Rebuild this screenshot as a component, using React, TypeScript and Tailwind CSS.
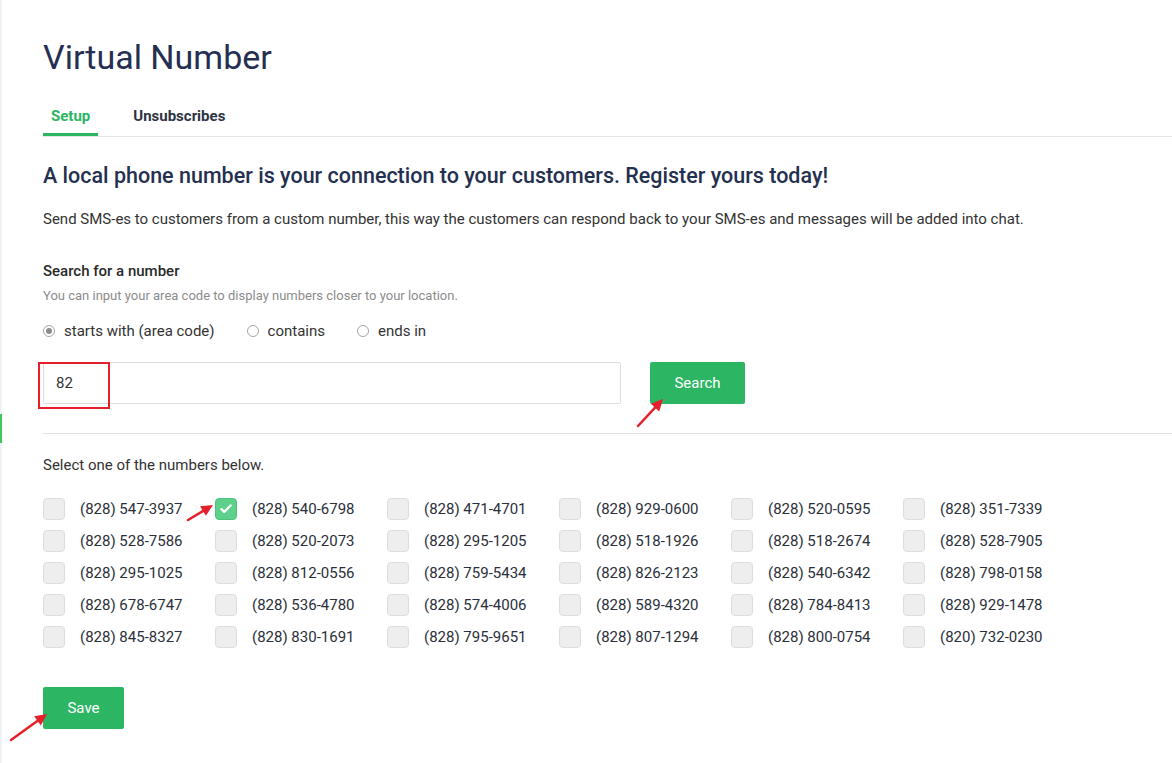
import { Check } from 'lucide-react'

const numbers = [
  ['(828) 547-3937', '(828) 540-6798', '(828) 471-4701', '(828) 929-0600', '(828) 520-0595', '(828) 351-7339'],
  ['(828) 528-7586', '(828) 520-2073', '(828) 295-1205', '(828) 518-1926', '(828) 518-2674', '(828) 528-7905'],
  ['(828) 295-1025', '(828) 812-0556', '(828) 759-5434', '(828) 826-2123', '(828) 540-6342', '(828) 798-0158'],
  ['(828) 678-6747', '(828) 536-4780', '(828) 574-4006', '(828) 589-4320', '(828) 784-8413', '(828) 929-1478'],
  ['(828) 845-8327', '(828) 830-1691', '(828) 795-9651', '(828) 807-1294', '(828) 800-0754', '(820) 732-0230'],
]

function Arrow({ x1, y1, x2, y2 }: { x1: number; y1: number; x2: number; y2: number }) {
  // red annotation arrow, drawn tail -> tip
  const ang = Math.atan2(y2 - y1, x2 - x1)
  const len = 13
  const spread = 0.45
  const ax = x2 - len * Math.cos(ang - spread)
  const ay = y2 - len * Math.sin(ang - spread)
  const bx = x2 - len * Math.cos(ang + spread)
  const by = y2 - len * Math.sin(ang + spread)
  const sx = x2 - 9 * Math.cos(ang)
  const sy = y2 - 9 * Math.sin(ang)
  return (
    <g>
      <line x1={x1} y1={y1} x2={sx} y2={sy} stroke="#e4202a" strokeWidth={2.5} strokeLinecap="round" />
      <polygon points={`${x2},${y2} ${ax},${ay} ${bx},${by}`} fill="#e4202a" />
    </g>
  )
}

function Radio({ label, checked }: { label: string; checked?: boolean }) {
  return (
    <label className="flex items-center gap-[9px]">
      <span className="w-3 h-3 rounded-full border border-[#a5a5a5] bg-white flex items-center justify-center">
        {checked && <span className="w-[6px] h-[6px] rounded-full bg-[#8d8d8d]" />}
      </span>
      <span>{label}</span>
    </label>
  )
}

export default function App() {
  return (
    <div className="relative flex min-h-[763px] bg-white text-[#333] font-['Roboto','Liberation_Sans',sans-serif]">
      {/* sidebar edge */}
      <div className="w-[2px] shrink-0 bg-[#eef1f6]">
        <div className="mt-[414px] h-[29px] w-[2px] bg-[#3cc75a]" />
      </div>

      <div className="flex-1 pl-[41px] pt-[37px]">
        <h1 className="text-[34px] leading-[40px] text-[#252f52] font-normal">Virtual Number</h1>

        <div className="mt-[29px] flex border-b border-[#e6e6e6] text-[15px] leading-5 font-bold">
          <div className="px-2 pb-[7px] border-b-[3px] border-[#2cb563] text-[#2cb563]">Setup</div>
          <div className="ml-[27px] px-2 pb-[7px] text-[#2e3444]">Unsubscribes</div>
        </div>

        <h2 className="mt-[25px] text-[21.5px] leading-7 font-medium text-[#24304f]">
          A local phone number is your connection to your customers. Register yours today!
        </h2>
        <p className="mt-[18px] text-[15px] leading-[22px] text-[#333]">
          Send SMS-es to customers from a custom number, this way the customers can respond back to your SMS-es and messages will be added into chat.
        </p>

        <div className="mt-[31px] text-[15px] leading-5 font-medium text-[#2a2a2a]">Search for a number</div>
        <div className="mt-[6px] text-[13px] leading-[18px] text-[#8c8c8c]">
          You can input your area code to display numbers closer to your location.
        </div>

        <div className="mt-4 flex items-center gap-8 text-[15px] leading-5 text-[#333]">
          <Radio label="starts with (area code)" checked />
          <Radio label="contains" />
          <Radio label="ends in" />
        </div>

        <div className="mt-[21px] flex items-center gap-[29px] pb-[29px] border-b border-[#e2e2e2]">
          <div className="relative w-[578px] h-[42px] border border-[#dedede] rounded-[2px] flex items-center px-3 text-[15px] text-[#333]">
            82
            <div className="absolute left-[-6px] top-[-1px] w-[72px] h-[47px] border-2 border-[#e4202a]" />
          </div>
          <button className="w-[95px] h-[42px] rounded-[2px] bg-[#2cb563] text-white text-[15px] font-normal">
            Search
          </button>
        </div>

        <div className="mt-[21px] text-[15px] leading-5 text-[#333]">Select one of the numbers below.</div>

        <div className="mt-[23px] flex flex-col gap-[10px]">
          {numbers.map((row, r) => (
            <div key={r} className="flex">
              {row.map((n, c) => {
                const checked = r === 0 && c === 1
                return (
                  <div key={c} className="w-[172px] flex items-center gap-[15px] text-[15px] leading-[22px] text-[#2b2f3a]">
                    {checked ? (
                      <span className="w-[22px] h-[22px] rounded-[4px] bg-[#5dd18b] border border-[#4cc57c] flex items-center justify-center">
                        <Check size={14} strokeWidth={4} className="text-white" />
                      </span>
                    ) : (
                      <span className="w-[22px] h-[22px] rounded-[4px] bg-[#eeeeee] border border-[#dddddd]" />
                    )}
                    <span>{n}</span>
                  </div>
                )
              })}
            </div>
          ))}
        </div>

        <button className="mt-[39px] w-[81px] h-[42px] rounded-[2px] bg-[#2cb563] text-white text-[15px] font-normal">
          Save
        </button>
      </div>

      {/* annotation arrows */}
      <svg className="absolute left-0 top-0 pointer-events-none" width={1172} height={763}>
        <Arrow x1={638} y1={426} x2={663} y2={399} />
        <Arrow x1={188} y1={520} x2={213} y2={505} />
        <Arrow x1={11} y1={740} x2={47} y2={714} />
      </svg>
    </div>
  )
}
